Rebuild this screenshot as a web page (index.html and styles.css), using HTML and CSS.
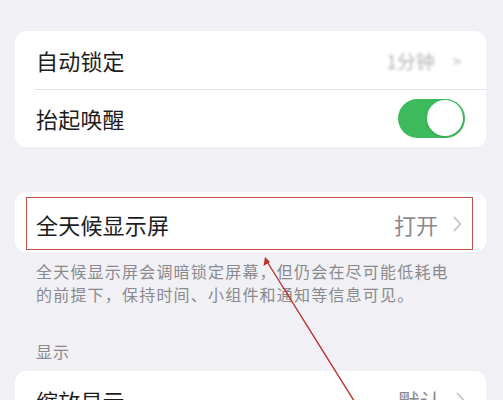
FILE: index.html
```html
<!DOCTYPE html>
<html lang="zh-CN">
<head>
    <meta charset="UTF-8">
    <meta name="viewport" content="width=device-width, initial-scale=1.0">
    <title>显示与亮度</title>
    <link rel="stylesheet" href="styles.css">
</head>
<body>
    <div class="page">
        <div class="group">
            <div class="row">
                <span class="label">自动锁定</span>
                <span class="value blurred">1分钟 <span class="chev">&gt;</span></span>
            </div>
            <div class="row">
                <span class="label">抬起唤醒</span>
                <span class="switch on"><span class="knob"></span></span>
            </div>
        </div>

        <div class="group group-aod">
            <div class="row highlight">
                <span class="label">全天候显示屏</span>
                <span class="value">打开
                    <svg class="chevron" width="9" height="16" viewBox="0 0 9 16"><path d="M1.5 1.5 L7.5 8 L1.5 14.5" fill="none" stroke="#c4c4c8" stroke-width="1.8" stroke-linecap="round" stroke-linejoin="round"/></svg>
                </span>
            </div>
        </div>
        <p class="footnote">全天候显示屏会调暗锁定屏幕，但仍会在尽可能低耗电的前提下，保持时间、小组件和通知等信息可见。</p>

        <div class="section-title">显示</div>
        <div class="group">
            <div class="row">
                <span class="label">缩放显示</span>
                <span class="value">默认
                    <svg class="chevron" width="9" height="16" viewBox="0 0 9 16"><path d="M1.5 1.5 L7.5 8 L1.5 14.5" fill="none" stroke="#c4c4c8" stroke-width="1.8" stroke-linecap="round" stroke-linejoin="round"/></svg>
                </span>
            </div>
        </div>
    </div>

    <!-- annotation arrow drawn over the screenshot -->
    <svg class="annotation" width="503" height="400" viewBox="0 0 503 400">
        <line x1="266" y1="260" x2="356" y2="404" stroke="#b8312a" stroke-width="1.4"/>
        <path d="M265 257 L263.5 266 L270 262 Z" fill="#b8312a"/>
    </svg>
</body>
</html>
```

FILE: styles.css
```css
* {
    margin: 0;
    padding: 0;
    box-sizing: border-box;
}

html, body {
    height: 100%;
    overflow: hidden;
}

body {
    background: #f0f0f5;
    font-family: "Noto Sans CJK SC", "Noto Sans", sans-serif;
    color: #1c1c1e;
    position: relative;
}

.page {
    padding: 31px 17px 0 15px;
}

.group {
    background: #fff;
    border-radius: 11px;
    overflow: hidden;
}

.row {
    height: 58px;
    padding: 0 21px;
    display: flex;
    align-items: center;
    justify-content: space-between;
    position: relative;
}

.row + .row::before {
    content: '';
    position: absolute;
    top: 0;
    left: 20px;
    right: 0;
    border-top: 1px solid #e2e2e6;
}

.label {
    font-size: 22px;
    letter-spacing: 0.2px;
}

.value {
    font-size: 22px;
    color: #8a8a8e;
    display: flex;
    align-items: center;
    gap: 14px;
}

.value.blurred {
    color: #b4b4b8;
    font-size: 19px;
    filter: blur(1.4px);
    margin-right: 4px;
    gap: 18px;
}

.chev {
    font-size: 15px;
}

.switch {
    width: 67px;
    height: 39px;
    border-radius: 20px;
    background: #3dbb5c;
    display: flex;
    align-items: center;
    padding: 2px;
}

.switch.on {
    justify-content: flex-end;
}

.knob {
    width: 36px;
    height: 36px;
    border-radius: 50%;
    background: #fff;
    box-shadow: 0 1px 3px rgba(0, 0, 0, 0.15);
}

.group-aod {
    margin-top: 45px;
    padding: 5px 13px 2px 11px;
}

.row.highlight {
    height: 53px;
    padding: 0 10px 0 9px;
    border: 1.5px solid #c85048;
}

.row.highlight .value {
    gap: 15px;
}

.footnote {
    font-size: 16px;
    line-height: 23px;
    letter-spacing: 1.2px;
    color: #8a8a8e;
    padding: 8px 32px 0 21px;
}

.section-title {
    font-size: 16px;
    line-height: 23px;
    letter-spacing: 1px;
    color: #8a8a8e;
    padding: 34px 0 0 21px;
    margin-bottom: 8px;
}

.annotation {
    position: absolute;
    left: 0;
    top: 0;
    pointer-events: none;
}
```
